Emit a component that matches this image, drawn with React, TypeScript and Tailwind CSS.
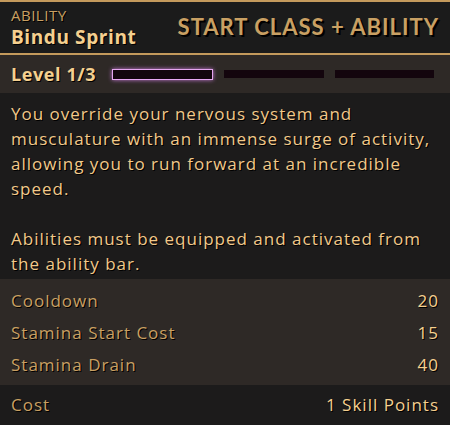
import React from 'react';

const stats = [
  { label: 'Cooldown', value: '20' },
  { label: 'Stamina Start Cost', value: '15' },
  { label: 'Stamina Drain', value: '40' },
];

const shadow = '[text-shadow:1px_1px_0_#000]';

export default function App() {
  return (
    <div className="w-[450px] h-[425px] overflow-hidden bg-[#1c1b1b] text-[#f2c98a] font-['Open_Sans',sans-serif] tracking-[1px]">
      <div className="h-[55px] border-t-2 border-b-2 border-[#c49a5c] bg-[#1b1b1b] flex items-center justify-between px-[11px]">
        <div className="flex flex-col">
          <span className={`text-[15px] leading-[19px] tracking-[0.5px] text-[#c9a063] ${shadow}`}>ABILITY</span>
          <span className={`text-[19px] leading-[25px] font-bold tracking-[0.6px] text-[#f5d08f] ${shadow}`}>Bindu Sprint</span>
        </div>
        <span className="font-['Lato',sans-serif] text-[22px] font-bold tracking-[1px] text-[#c9a063] [text-shadow:2px_2px_0_#000] mb-[2px]">START CLASS + ABILITY</span>
      </div>
      <div className="h-[38px] bg-[#2e2926] flex items-center px-[11px]">
        <span className={`text-[18px] font-bold text-[#f5d08f] w-[101px] tracking-[0.6px] ${shadow}`}>Level 1/3</span>
        <div className="flex gap-[11px] flex-1 pr-[5px]">
          <div className="h-[11px] flex-1 bg-[#13050d] border border-[#e6a6f0] shadow-[0_0_4px_#c67ad6]" />
          <div className="h-[8px] self-center flex-1 bg-[#13050d]" />
          <div className="h-[8px] self-center flex-1 bg-[#13050d]" />
        </div>
      </div>
      <div className={`h-[186px] px-[11px] pt-[8px] text-[17px] leading-[25px] whitespace-nowrap ${shadow}`}>
        <p>You override your nervous system and<br />musculature with an immense surge of activity,<br />allowing you to run forward at an incredible<br />speed.</p>
        <p className="mt-[25px]">Abilities must be equipped and activated from<br />the ability bar.</p>
      </div>
      <div className="h-[106px] bg-[#2e2926] px-[11px] pt-[6px] flex flex-col">
        {stats.map(s => (
          <div key={s.label} className={`h-[32px] flex items-center justify-between text-[17px] ${shadow}`}>
            <span className="text-[#c9a063]">{s.label}</span>
            <span className="text-[#f5d08f]">{s.value}</span>
          </div>
        ))}
      </div>
      <div className={`h-[40px] px-[11px] flex items-center justify-between text-[17px] ${shadow}`}>
        <span className="text-[#c9a063]">Cost</span>
        <span className="text-[#f5d08f]">1 Skill Points</span>
      </div>
    </div>
  );
}
